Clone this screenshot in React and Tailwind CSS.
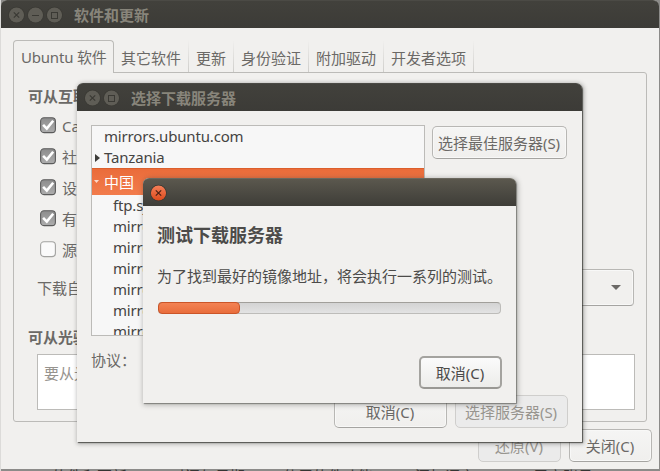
import React from "react";

function WindowButton({ kind, active = false }) {
  return (
    <svg className="block h-[18px] w-[18px] shrink-0" viewBox="0 0 18 18" fill="none">
      <defs>
        <linearGradient id="closeFill" x1="0" y1="0" x2="0" y2="1">
          <stop offset="0" stopColor="#f58059" />
          <stop offset="1" stopColor="#dd4a1c" />
        </linearGradient>
      </defs>
      <circle cx="9.5" cy="9" r="8.2" fill={active ? "#35342f" : "#393833"} />
      <circle cx="9.5" cy="9" r="7.6" fill={active ? "url(#closeFill)" : "#5f5d56"} />
      {kind === "close" && (
        <path d="M6.8 6.3 12.2 11.7M12.2 6.3 6.8 11.7" stroke={active ? "#4b2014" : "#3a3934"} strokeWidth="1.2" />
      )}
      {kind === "minimize" && <path d="M6 9.5h7" stroke="#3a3934" strokeWidth="1" />}
      {kind === "maximize" && <rect x="6.5" y="6.5" width="6" height="6" stroke="#3a3934" strokeWidth="1" />}
    </svg>
  );
}

function TitleBar({ title, buttons, active = false }) {
  const tone = active
    ? "border-[#6b685e] bg-linear-to-b from-[#5b584e] to-[#3e3d38]"
    : "border-[#4b4a45] bg-linear-to-b from-[#42413c] to-[#3c3b37]";
  return (
    <div className={`flex h-7 shrink-0 items-center gap-px rounded-t-md border-t pl-[6px] ${tone}`}>
      {buttons.map((kind) => (
        <WindowButton key={kind} kind={kind} active={active} />
      ))}
      {title && <span className="ml-[10px] font-bold text-[#88857b]">{title}</span>}
    </div>
  );
}

function Button({ children, className, disabled = false }) {
  const tone = disabled
    ? "border-[#cfcecc] bg-[#ebebeb] text-[#98958f]"
    : "border-[#b8b7b4] border-b-[#a5a4a1] bg-linear-to-b from-[#f5f5f4] to-[#f0efed] text-[#6b6966] shadow-[inset_0_0_0_1px_#f8f8f7]";
  return (
    <button type="button" className={`flex h-[33px] shrink-0 items-center justify-center rounded-[5px] border pr-px ${tone} ${className}`}>
      {children}
    </button>
  );
}

function CheckRow({ label, checked }) {
  return (
    <div className="flex h-[31px] items-center gap-[6px]">
      <svg className="block h-[17px] w-4 shrink-0" viewBox="0 0 16 17" fill="none">
        <defs>
          <linearGradient id="checkFill" x1="0" y1="0" x2="0" y2="1">
            <stop offset="0" stopColor="#8d8d8d" />
            <stop offset="1" stopColor="#adadad" />
          </linearGradient>
        </defs>
        <rect x="0.6" y="0.8" width="14.8" height="14.8" rx="3.4" fill={checked ? "url(#checkFill)" : "#fafafa"} stroke={checked ? "#5b5b5b" : "#a2a2a0"} strokeWidth="1.1" />
        {checked && <path d="M3.1 7.9 6.8 11.6 13.2 3.8" stroke="#fff" strokeWidth="2.6" />}
      </svg>
      <span>{label}</span>
    </div>
  );
}

function Tab({ children, width }) {
  return (
    <div className={`flex h-8 items-center justify-between pl-[7px] ${width}`}>
      <span className="pt-[3px]">{children}</span>
      <span className="h-8 w-px bg-linear-to-b from-[#f1f0ee] to-[#cfcecb]" />
    </div>
  );
}

function SourcesWindow() {
  return (
    <section className="absolute left-px top-0 flex h-[469px] w-[658px] flex-col rounded-t-md bg-[#f1f0ee] text-[#6b6966]">
      <TitleBar title="软件和更新" buttons={["close", "minimize", "maximize"]} />
      <div className="flex flex-col pl-3 pt-3">
        <div className="z-10 flex h-8">
          <div className="h-[33px] w-[101px] rounded-t-[4px] border border-b-0 border-[#bcbbb8] bg-[#f1f0ee] pl-[7px] pt-[5px] tracking-[-0.2px]">
            Ubuntu 软件
          </div>
          <Tab width="w-[75px]">其它软件</Tab>
          <Tab width="w-[45px]">更新</Tab>
          <Tab width="w-[75px]">身份验证</Tab>
          <Tab width="w-[75px]">附加驱动</Tab>
          <Tab width="w-[90px]">开发者选项</Tab>
        </div>
        <div className="flex h-[350px] w-[634px] flex-col rounded-[3px] rounded-tl-none border border-[#bcbbb8] pl-[14px] pt-[12px]">
          <h2 className="h-[25px] font-bold">可从互联网下载</h2>
          <div className="pl-3">
            <CheckRow label="Canonical 支持" checked />
            <CheckRow label="社区维护" checked />
            <CheckRow label="设备驱动" checked />
            <CheckRow label="有版权" checked />
            <CheckRow label="源代码" />
          </div>
          <div className="mt-[4px] flex h-[37px] items-center justify-between pl-[9px] pr-3">
            <span className="pt-px">下载自：</span>
            <div className="flex h-[37px] w-[400px] items-center justify-end rounded-[4px] border border-[#b8b7b4] border-b-[#a5a4a1] pr-[12px] shadow-[inset_0_0_0_1px_#f8f8f7]">
              <svg className="block h-[5px] w-[10px]" viewBox="0 0 10 5"><path d="M0 0h10L5 5Z" fill="#6b6966" /></svg>
            </div>
          </div>
          <h2 className="mt-[20px] h-7 font-bold">可从光驱安装</h2>
          <div className="ml-[9px] h-14 w-[598px] border border-[#bcbbb8] bg-white pl-[6px] pt-[7px] text-[#96938e]">
            要从光盘安装
          </div>
        </div>
        <div className="mt-[7px] flex justify-end gap-2 pr-[7px]">
          <Button className="w-[83px]" disabled>还原(V)</Button>
          <Button className="w-[83px]">关闭(C)</Button>
        </div>
      </div>
    </section>
  );
}

const mirrors = ["ftp.sjtu", "mirror.bit", "mirror.lzu", "mirrors.163", "mirrors.ali", "mirrors.sohu", "mirrors.ustc"];

function ServerDialog() {
  return (
    <section className="absolute left-[77px] top-[83px] flex h-[359px] w-[505px] flex-col rounded-t-md bg-[#f1f0ee] text-[#6b6966] shadow-[1px_1px_1px_0px_rgba(40,40,36,0.7),1px_1px_4px_1px_rgba(40,40,36,0.35)]">
      <TitleBar title="选择下载服务器" buttons={["close", "maximize"]} />
      <div className="flex flex-col pl-[14px] pt-[14px]">
        <div className="flex gap-[7px]">
          <div className="h-[211px] w-[334px] overflow-hidden border border-[#bcbbb8] bg-[#f7f7f7] leading-[21px] tracking-[-0.17px] text-[#454442]">
            <div className="h-[21px] pl-3">mirrors.ubuntu.com</div>
            <div className="flex h-[21px] items-center gap-1 pl-[3px]">
              <svg className="block h-2 w-[5px]" viewBox="0 0 5 8"><path d="M0 0 5 4 0 8Z" fill="#3d3c3a" /></svg>
              <span>Tanzania</span>
            </div>
            <div className="flex h-[27px] items-center gap-[5px] border-t border-[#dc5f2c] bg-linear-to-b from-[#ea6c3a] to-[#f27c4c] pl-[2px] tracking-normal text-white">
              <svg className="mt-[-2px] block h-[3px] w-[5px]" viewBox="0 0 5 3"><path d="M0 0h5L2.5 3Z" fill="#fbd9cb" /></svg>
              <span>中国</span>
            </div>
            {mirrors.map((host) => (
              <div key={host} className="h-[21px] pl-[21px]">{host}</div>
            ))}
          </div>
          <Button className="mt-px w-[135px]">选择最佳服务器(S)</Button>
        </div>
        <div className="mt-[13px] h-[22px]">协议：</div>
        <div className="mt-[24px] flex justify-end gap-2 pr-[14px]">
          <Button className="w-[113px]">取消(C)</Button>
          <Button className="w-[113px]" disabled>选择服务器(S)</Button>
        </div>
      </div>
    </section>
  );
}

function TestDialog() {
  return (
    <section className="absolute left-[143px] top-[178px] flex h-[225px] w-[373px] flex-col rounded-t-md bg-[#f1f0ee] text-[#4c4b49] shadow-[1px_1px_1px_0px_rgba(60,60,56,0.5),1px_1px_5px_1px_rgba(60,60,56,0.35)]">
      <TitleBar buttons={["close"]} active />
      <div className="flex flex-col pl-[14px] pr-[14px] pt-[16px]">
        <h1 className="h-[27px] text-[18px] leading-[26px] font-bold">测试下载服务器</h1>
        <p className="mt-[16px] h-[23px]">为了找到最好的镜像地址，将会执行一系列的测试。</p>
        <div className="ml-px mt-[14px] h-3 w-[343px] rounded-[4px] border border-[#bdbcb9] border-t-[#a19f9a] bg-linear-to-b from-[#d3d3d3] to-[#e3e3e3]">
          <div className="-ml-px -mt-px h-3 w-[82px] rounded-[4px] border border-[#cb5528] bg-linear-to-b from-[#f38253] to-[#e96d3b]" />
        </div>
        <div className="mt-[42px] flex justify-end">
          <button type="button" className="flex h-[33px] w-[83px] items-center justify-center rounded-[5px] border-2 border-[#a4a39f] border-b-[#999894] bg-linear-to-b from-[#fbfbfb] to-[#ececea] pr-px">
            取消(C)
          </button>
        </div>
      </div>
    </section>
  );
}

export default function App() {
  return (
    <main className="relative h-[471px] w-[660px] overflow-hidden bg-[#8c8b89] text-[15px] leading-[22px] whitespace-nowrap font-['Noto_Sans','Noto_Sans_CJK_SC',sans-serif]">
      <div className="absolute left-0 top-0 h-[471px] w-px bg-[#dcdbd9]" />
      <div className="absolute left-[52px] top-[465px] flex leading-[22px] text-[#353432]">
        <span className="w-[118px]">软件和更新</span>
        <span className="w-[113px]">时间与日期</span>
        <span className="w-[132px]">使用软件功能</span>
        <span className="w-[118px]">添加语言</span>
        <span>用户账号</span>
      </div>
      <SourcesWindow />
      <ServerDialog />
      <TestDialog />
    </main>
  );
}
